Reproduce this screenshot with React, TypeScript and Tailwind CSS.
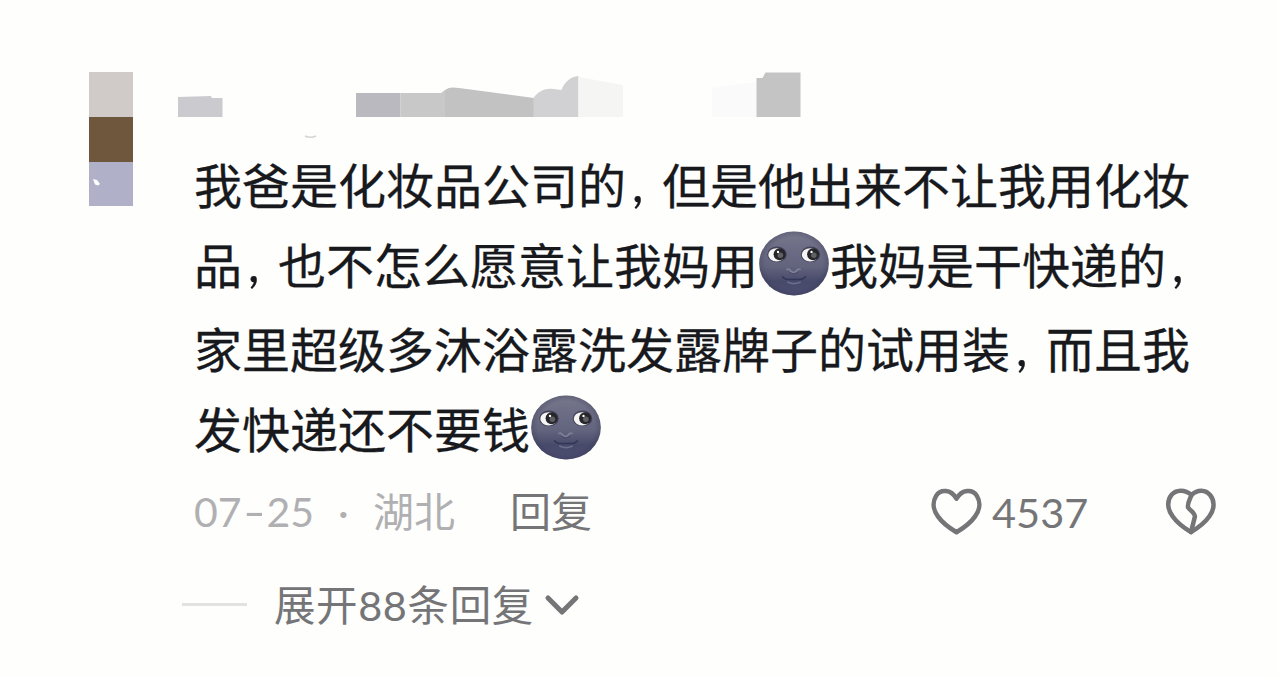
import React from 'react';

// Full-width comma, set tighter than one em
const Comma: React.FC = () => (
  <span className="inline-block w-[36px] whitespace-nowrap pl-[6px] font-['Lato'] text-[50px] leading-[80px]">
    ,
  </span>
);

const MoonFace: React.FC<{ id: string }> = ({ id }) => (
  <svg className="h-[65px] w-[70px] shrink-0" viewBox="0 0 70 66" preserveAspectRatio="none">
    <defs>
      <linearGradient id={`${id}-skin`} x1="0" y1="0" x2="0" y2="1">
        <stop offset="0" stopColor="#77788c" />
        <stop offset="0.25" stopColor="#6d6e86" />
        <stop offset="0.55" stopColor="#62637c" />
        <stop offset="0.78" stopColor="#484a6b" />
        <stop offset="1" stopColor="#4c4d70" />
      </linearGradient>
      <radialGradient id={`${id}-edge`} cx="0.5" cy="0.5" r="0.5">
        <stop offset="0.82" stopColor="#34354f" stopOpacity="0" />
        <stop offset="1" stopColor="#34354f" stopOpacity="0.3" />
      </radialGradient>
    </defs>
    <ellipse cx="35" cy="33" rx="34.800" ry="32.500" fill={`url(#${id}-skin)`} />
    <ellipse cx="35" cy="33" rx="34.800" ry="32.500" fill={`url(#${id}-edge)`} />
    <ellipse cx="18" cy="23.800" rx="9.800" ry="8" fill="#43445a" />
    <ellipse cx="17.600" cy="24.200" rx="8.300" ry="6.800" fill="#f6f5f3" />
    <circle cx="20.600" cy="23.600" r="6" fill="#26262a" />
    <circle cx="21.400" cy="24.600" r="2.800" fill="#5f6064" />
    <circle cx="19" cy="21.200" r="1.200" fill="#fff" />
    <ellipse cx="51.500" cy="23.800" rx="9.800" ry="8" fill="#43445a" />
    <ellipse cx="51.100" cy="24.200" rx="8.300" ry="6.800" fill="#f6f5f3" />
    <circle cx="54.100" cy="23.600" r="6" fill="#26262a" />
    <circle cx="54.900" cy="24.600" r="2.800" fill="#5f6064" />
    <circle cx="52.500" cy="21.200" r="1.200" fill="#fff" />
    <path d="M28 39c1.500-1 3 .5 4 2 1.200 1.200 3.800 1.200 5 0 1-1.500 2.500-3 4-2" fill="none" stroke="#7f8098" strokeWidth="1.800" strokeLinecap="round" />
    <path d="M30 42l4.700 1.800 4.700-1.800" fill="none" stroke="#4a4b66" strokeWidth="1" />
    <path d="M23.500 46.500c2 2.500 4 3 6.500 2.800h10c2.500.2 4.500-.3 6.500-2.800" fill="none" stroke="#34355a" strokeWidth="1.500" strokeLinecap="round" />
    <path d="M29 52c4 1.800 8 1.800 12 0" fill="none" stroke="#6d6e8b" strokeWidth="1.800" strokeLinecap="round" />
  </svg>
);

const MaskedName: React.FC = () => (
  <svg className="block h-[66px] w-[640px]" viewBox="178 72 640 66">
    <path d="M178 97l33-1 1 2h10.500v19H178z" fill="#cbcace" />
    <path d="M356 93h44.500v24H356z" fill="#bab9bf" />
    <path d="M400.500 93H441l4-3v27h-44.500z" fill="#c8c8c8" />
    <path d="M445 117V90c4-3 8-3 14-2l75 10v19z" fill="#c2c2c2" />
    <path d="M533.500 98c5-7 12-10 20-9l8 1c3-8 9-13.500 17-14v41h-45z" fill="#d1d1d3" />
    <path d="M578.500 77l44.500 8v32h-44.500z" fill="#f5f5f4" />
    <path d="M712 88l44.500-6v35H712z" fill="#fafafa" />
    <path d="M756.500 78h6l3-5.500h35V117h-44z" fill="#c4c4c4" />
    <path d="M305 136c3 1.500 8 1.500 11 0" fill="none" stroke="#d4d4d4" strokeWidth="1.500" />
  </svg>
);

const Heart: React.FC<{ broken?: boolean }> = ({ broken }) => (
  <svg
    className="mb-[2px] h-[49px] w-[51px] shrink-0"
    viewBox="0 0 52 50"
    fill="none"
    stroke="#757578"
    strokeWidth="4.600"
    strokeLinejoin="round"
    strokeLinecap="round"
  >
    {broken ? (
      <>
        <path d="M27 8.200C20 2 11 2.800 6.500 8.200c-4.800 6-4 14.500 1 21.300C12 36 20 42 26.500 46 33 42 41 36 45.500 29.500c5-6.800 5.500-15.300.5-21.300C41.500 2.800 33.500 2 27 8.200z" />
        <path d="M27 8.200c-1.500 4-4.500 9-3.500 12.500 2 3.500 6.500 5 7 9.500l-4 15.800" />
      </>
    ) : (
      <path d="M26 12C20.500 2 9.500 2 5.200 9c-4 6.500-3 14.500 1.800 21C11.500 36.500 19 42 26 46.200 33 42 40.500 36.500 45 30c4.800-6.500 5.800-14.500 1.800-21C42.500 2 31.500 2 26 12z" />
    )}
  </svg>
);

const App: React.FC = () => {
  return (
    <div className="h-[678px] w-[1279px] overflow-hidden bg-[#fefefd] pt-[72px] font-['Lato','Noto_Sans_CJK_SC',sans-serif] text-[#757578]">
      <div className="flex pl-[89px]">
        <div className="flex w-[44px] shrink-0 flex-col">
          <div className="h-[45px] bg-[#d0cbc9]" />
          <div className="h-[45px] bg-[#6f573e]" />
          <div className="h-[44px] bg-[#b0b1c9] pl-[4px] pt-[17px]">
            <svg className="h-[7px] w-[7px]" viewBox="0 0 7 7">
              <path d="M0 0l4 1 3 4-2 1.500-3-1z" fill="#fff" />
            </svg>
          </div>
        </div>

        <div className="ml-[45px]">
          <MaskedName />
          <div className="pl-[16px] pt-[5px] font-['Noto_Sans_CJK_SC',sans-serif] text-[48px] text-[#17191d] [-webkit-text-stroke:0.3px_#17191d]">
            <div className="flex h-20 whitespace-nowrap leading-[80px]">
              我爸是化妆品公司的<Comma />但是他出来不让我用化妆
            </div>
            <div className="flex h-[84px] whitespace-nowrap leading-[80px]">
              品<Comma />也不怎么愿意让我妈用
              <span className="flex h-[81px] items-center pl-px pr-px"><MoonFace id="moon-a" /></span>
              我妈是干快递的<Comma />
            </div>
            <div className="flex h-20 whitespace-nowrap leading-[80px]">
              家里超级多沐浴露洗发露牌子的试用装<Comma />而且我
            </div>
            <div className="flex h-[85px] whitespace-nowrap leading-[80px]">
              发快递还不要钱
              <span className="flex h-[81px] items-center pl-px"><MoonFace id="moon-b" /></span>
            </div>
          </div>
        </div>
      </div>

      <div className="flex h-20 items-center whitespace-nowrap pl-[194px] text-[41px] leading-[80px]">
        <div className="flex w-[316px] text-[#b0b0b2]">
          <span className="w-[144px]">
            07<span className="inline-block w-[25px] scale-x-150 text-center">-</span>25
          </span>
          <span className="w-[35px]">·</span>
          <span>湖北</span>
        </div>
        <span className="w-[421px]">回复</span>
        <Heart />
        <span className="ml-[10px] w-[173px] text-[41.5px]">4537</span>
        <Heart broken />
      </div>

      <div className="flex h-20 items-center whitespace-nowrap pl-[182px] pt-[24px] text-[41.5px] leading-[80px]">
        <div className="h-[3px] w-[65px] bg-[#e2e2e3]" />
        <span className="ml-[27px] pt-[2px] tracking-[0.6px]">展开88条回复</span>
        <svg className="ml-[10px] mt-[2px] h-[24px] w-[36px]" viewBox="0 0 36 24" fill="none" stroke="#757578" strokeWidth="5" strokeLinecap="round" strokeLinejoin="round">
          <path d="M4 5l14 14L32 5" />
        </svg>
      </div>
    </div>
  );
};

export default App;
